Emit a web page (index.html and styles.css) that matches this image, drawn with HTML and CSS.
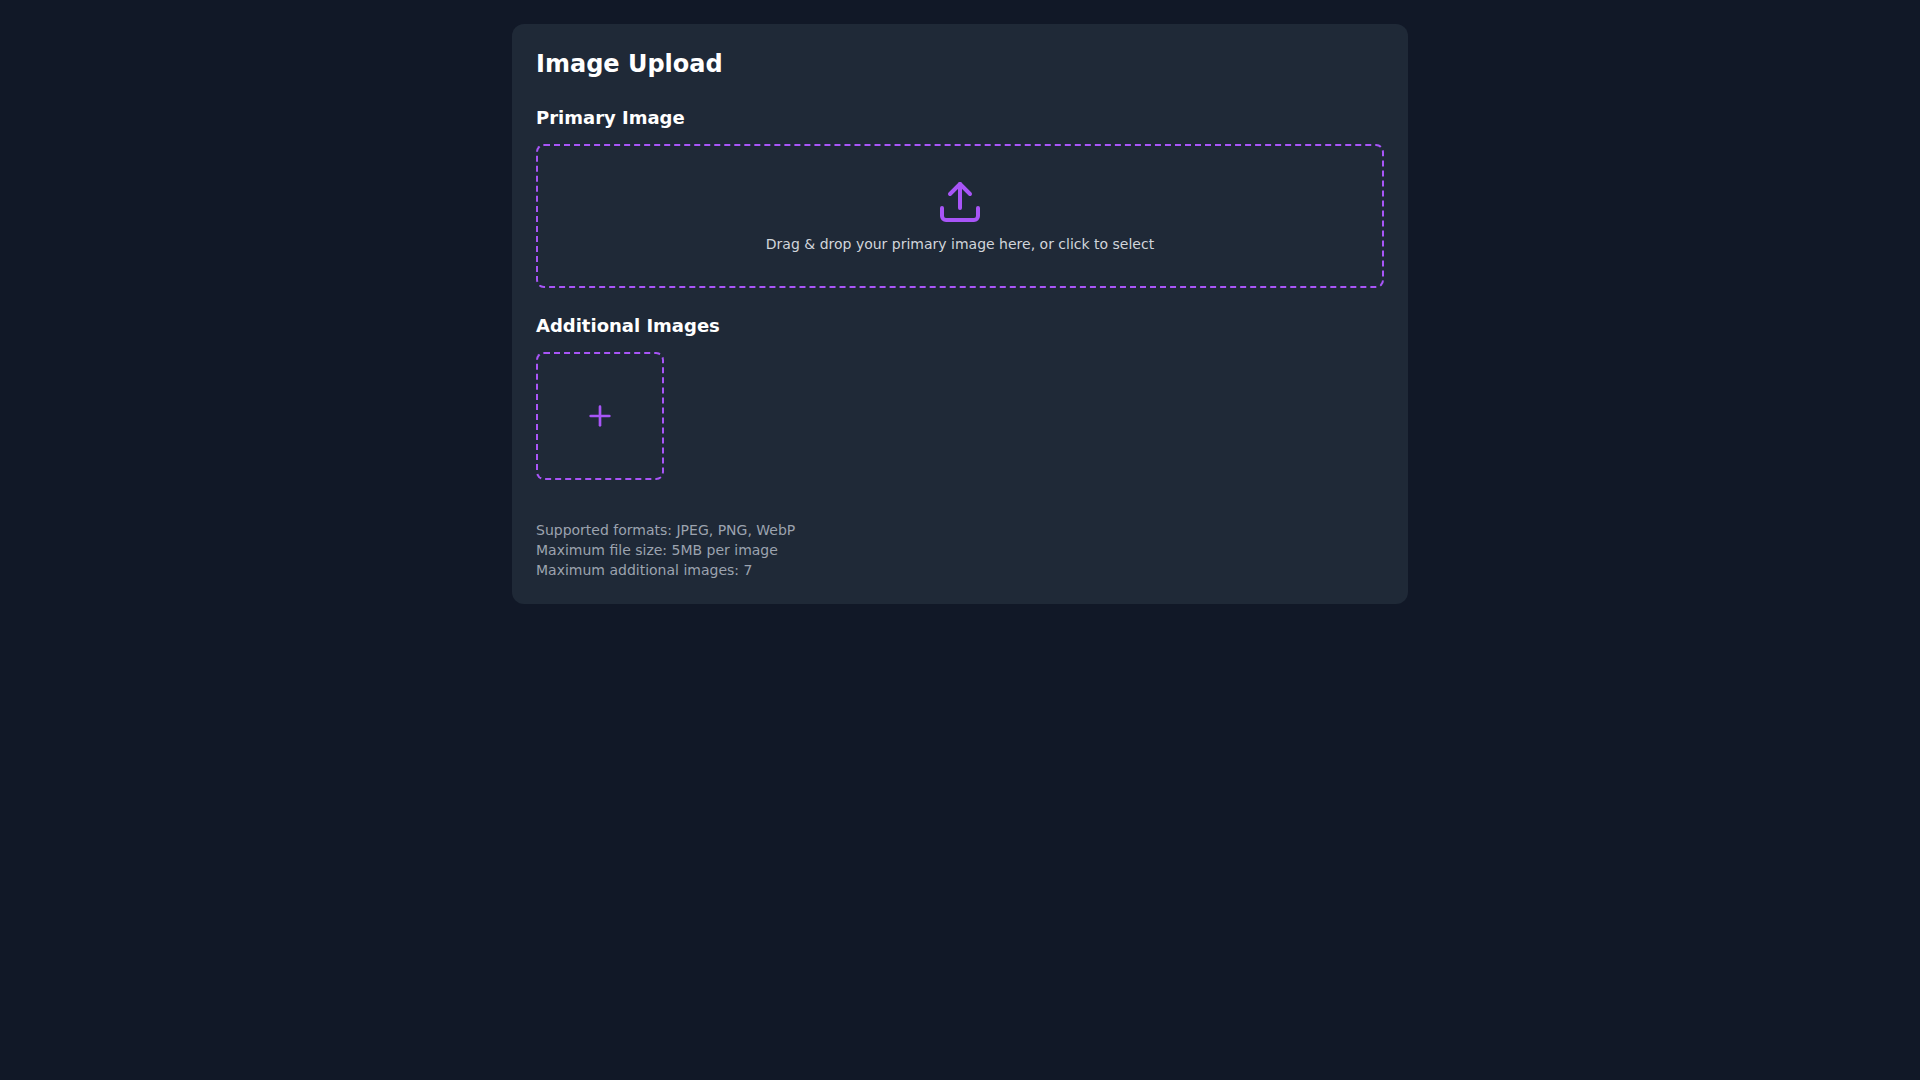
FILE: index.html
```html
<!DOCTYPE html>
<html lang="en">
<head>
  <meta charset="UTF-8">
  <meta name="viewport" content="width=device-width, initial-scale=1.0">
  <title>Image Upload</title>
  <link rel="stylesheet" href="styles.css">
</head>
<body>

<main class="container">
  <div class="card">
    <h1 class="card-title">Image Upload</h1>

    <section class="upload-section">
      <h2 class="section-title">Primary Image</h2>
      <button type="button" class="dropzone">
        <svg class="upload-icon" viewBox="0 0 24 24" fill="none" stroke="currentColor" stroke-width="2" stroke-linecap="round" stroke-linejoin="round" aria-hidden="true">
          <path d="M21 15v4a2 2 0 0 1-2 2H5a2 2 0 0 1-2-2v-4"/>
          <polyline points="17 8 12 3 7 8"/>
          <line x1="12" y1="3" x2="12" y2="15"/>
        </svg>
        <span class="dropzone-text">Drag &amp; drop your primary image here, or click to select</span>
      </button>
    </section>

    <section class="upload-section">
      <h2 class="section-title">Additional Images</h2>
      <div class="image-grid">
        <button type="button" class="add-image" aria-label="Add image">
          <svg class="plus-icon" viewBox="0 0 24 24" fill="none" stroke="currentColor" stroke-width="2" stroke-linecap="round" stroke-linejoin="round" aria-hidden="true">
            <line x1="12" y1="5" x2="12" y2="19"/>
            <line x1="5" y1="12" x2="19" y2="12"/>
          </svg>
        </button>
      </div>
    </section>

    <div class="upload-info">
      <p>Supported formats: JPEG, PNG, WebP</p>
      <p>Maximum file size: 5MB per image</p>
      <p>Maximum additional images: 7</p>
    </div>
  </div>
</main>

</body>
</html>
```
FILE: styles.css
```css
* {
  box-sizing: border-box;
  margin: 0;
  padding: 0;
}

body {
  min-height: 100vh;
  background-color: #111827;
  color: #fff;
  font-family: "DejaVu Sans", sans-serif;
  font-size: 16px;
  line-height: 24px;
}

.container {
  max-width: 944px;
  margin: 0 auto;
  padding: 24px;
}

.card {
  padding: 24px;
  background-color: #1f2937;
  border-radius: 12px;
}

.card-title {
  margin-bottom: 24px;
  font-size: 24px;
  line-height: 32px;
}

.upload-section {
  margin-bottom: 24px;
}

.section-title {
  margin-bottom: 12px;
  font-size: 18px;
  line-height: 28px;
}

.dropzone,
.add-image {
  display: flex;
  align-items: center;
  justify-content: center;
  background: none;
  border: 2px dashed #a855f7;
  border-radius: 8px;
  color: #a855f7;
  font-family: inherit;
  cursor: pointer;
}

.dropzone {
  flex-direction: column;
  width: 100%;
  padding: 32px;
}

.upload-icon {
  width: 48px;
  height: 48px;
  margin-bottom: 8px;
}

.dropzone-text {
  color: #d1d5db;
  font-size: 14px;
  line-height: 20px;
}

.image-grid {
  display: grid;
  grid-template-columns: repeat(6, 1fr);
  gap: 16px;
}

.add-image {
  aspect-ratio: 1;
}

.plus-icon {
  width: 32px;
  height: 32px;
}

.upload-info {
  margin-top: 40px;
  color: #9ca3af;
  font-size: 14px;
  line-height: 20px;
}
```
